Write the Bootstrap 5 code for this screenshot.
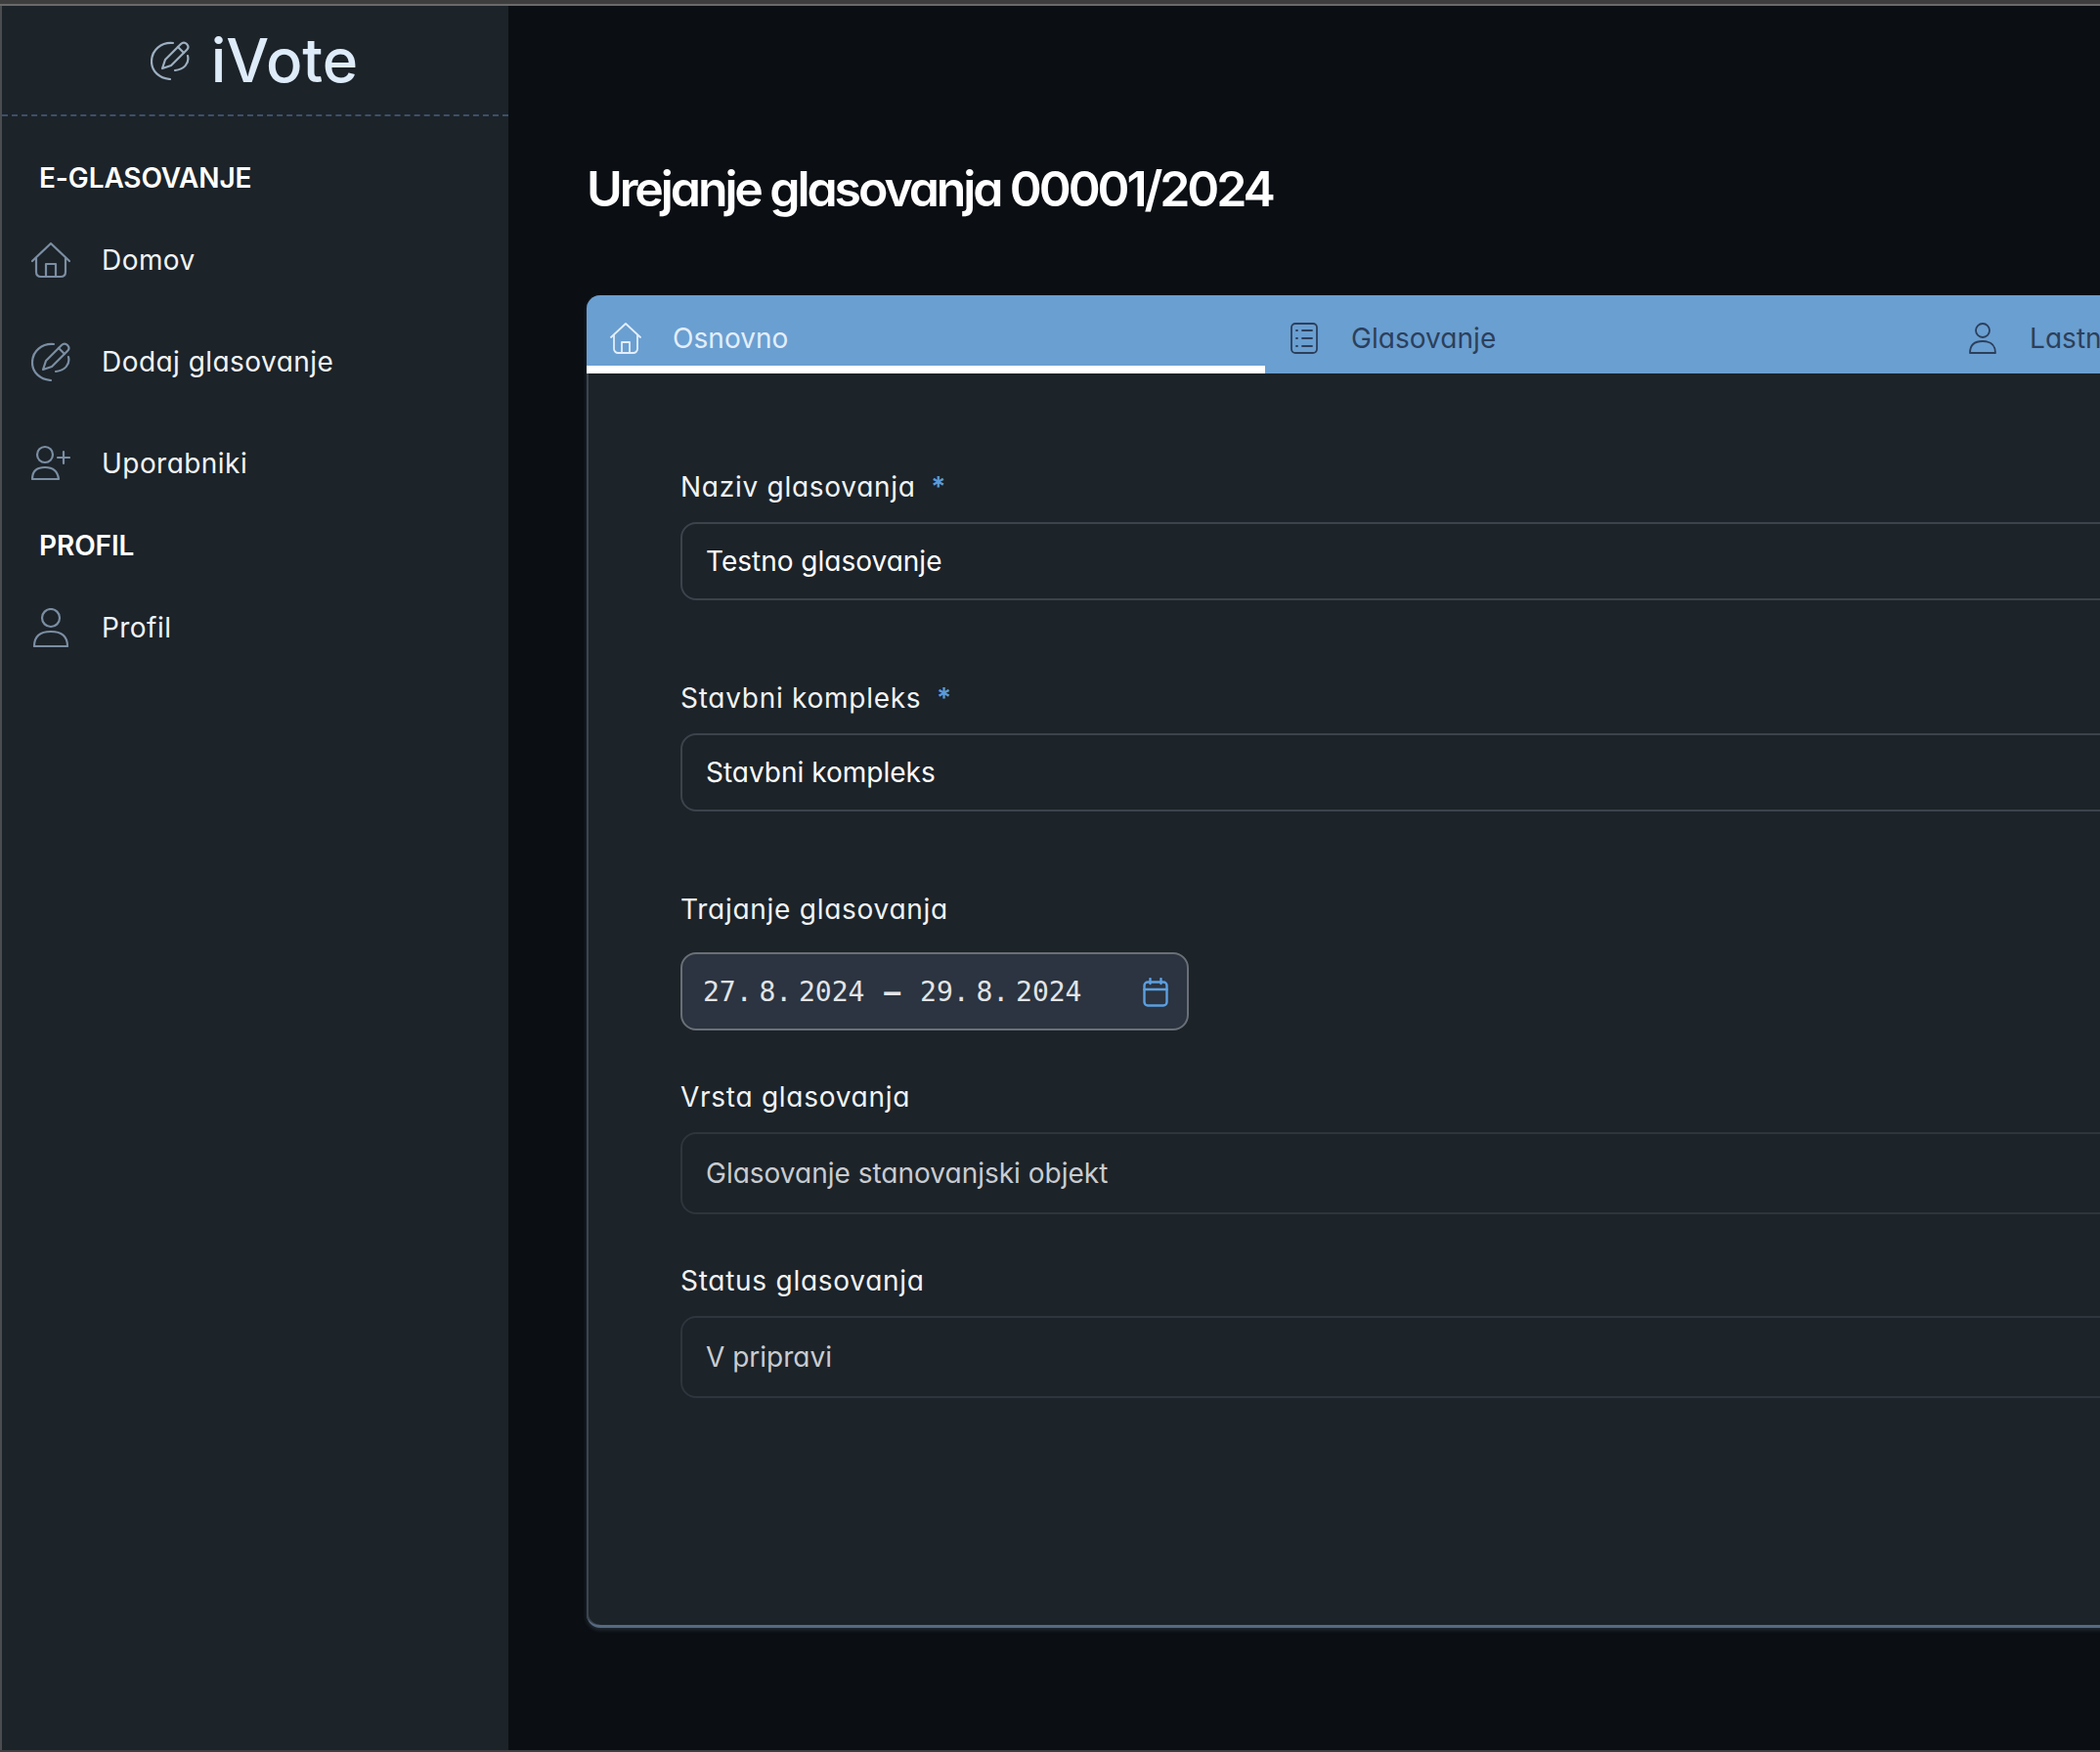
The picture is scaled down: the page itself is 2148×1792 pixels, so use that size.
<!DOCTYPE html>
<html lang="sl">
<head>
    <meta charset="UTF-8">
    <title>iVote - Urejanje glasovanja</title>
    <link href="https://cdn.jsdelivr.net/npm/bootstrap@5.3.0/dist/css/bootstrap.min.css" rel="stylesheet">
    <style>
        html, body { height: 100%; }
        body { background: #0b0f14; color: #fff; font-family: "Inter", "Noto Sans", sans-serif; font-feature-settings: "cv11"; overflow: hidden; }
        .frame-top { height: 6px; background: #3d3d3d; border-bottom: 2px solid #6a6a6a; }
        .frame-main { height: 1784px; border-left: 2px solid #4a4d50; }
        .frame-bottom { height: 2px; background: #3d3f42; }
        .side-panel { width: 518px; flex: 0 0 518px; background: #1c2329; }
        .side-brand { height: 113px; border-bottom: 2px dashed #3e5068; gap: 22px; padding-right: 2px; }
        .side-brand span { font-size: 62px; line-height: 1; font-weight: 500; color: #deebf9; letter-spacing: 0; }
        .side-section { height: 64px; padding-left: 38px; font-size: 28px; font-weight: 600; letter-spacing: -.1px; color: #fff; }
        .side-section.first { margin-top: 31px; }
        .side-link { height: 104px; padding: 0 0 0 30px; color: #f2f4f6; font-size: 28px; letter-spacing: .45px; gap: 32px; }
        .side-link:hover { color: #fff; }
        .side-icon { width: 40px; height: 40px; flex: 0 0 40px; fill: none; stroke: #7b8ea3; stroke-width: 2.2; stroke-linecap: round; stroke-linejoin: round; }
        .page-area { flex: 1 1 auto; min-width: 0; padding-left: 80px; }
        .page-title { height: 296px; margin: 0; font-size: 50px; font-weight: 600; letter-spacing: -3.1px; color: #fff; padding-top: 157px; line-height: 60px; }
        .vote-card { width: 2082px; height: 1363px; background: #1c2329; border: 0; border-bottom: 3px solid #566a80; border-radius: 14px; box-shadow: inset 2px 0 0 #3c444d, 0 2px 4px rgba(120, 140, 160, .25); overflow: hidden; }
        .vote-tabs { height: 80px; background: #6a9fd1; flex-wrap: nowrap; }
        .vote-tabs .nav-link { width: 694px; height: 80px; padding: 28px 0 0 24px; border-radius: 0; color: #2c3f5b; font-size: 28px; line-height: 32px; letter-spacing: .05px; gap: 32px; }
        .vote-tabs .nav-link.active { color: #e3eefb; border-bottom: 8px solid #fff; }
        .tab-icon { width: 32px; height: 32px; flex: 0 0 32px; fill: none; stroke: currentColor; stroke-width: 1.8; stroke-linecap: round; stroke-linejoin: round; }
        .vote-form { padding: 96px 0 0 96px; }
        .field-label { display: block; height: 40px; line-height: 40px; margin: 0 0 16px; font-size: 28px; letter-spacing: .73px; color: #f1f3f5; }
        .field-label b { color: #5a9bdc; font-weight: 600; margin-left: 7px; }
        .vote-form .form-control { height: 80px; padding: 0 24px; background: transparent; border: 2px solid #3c434b; border-radius: 16px; color: #fff; font-size: 28px; letter-spacing: 0; font-feature-settings: "cv11"; box-shadow: none; }
        .vote-form .form-control.locked { height: 84px; border-color: #2f353c; color: #c9ccd1; }
        .gap-large { margin-top: 80px; }
        .gap-small { margin-top: 48px; }
        .date-range { width: 520px; height: 80px; margin-top: 24px; padding: 2px 19px 0 21px; background: #2b3440; border: 2px solid #6b6f76; border-radius: 16px; color: #e2e4e7; font-family: "DejaVu Sans Mono", monospace; font-size: 28px; white-space: pre; }
        .date-range b { margin: 0 3px; }
        .date-dot { letter-spacing: -5px; }
        .date-icon { width: 26px; height: 30px; fill: none; stroke: #5c9fe0; stroke-width: 2.4; stroke-linecap: round; stroke-linejoin: round; }
    </style>
</head>
<body>
<div class="frame-top"></div>
<div class="frame-main d-flex">
    <!-- Sidebar -->
    <aside class="side-panel">
        <div class="side-brand d-flex align-items-center justify-content-center">
            <svg class="side-icon" viewBox="0 0 40 40" style="stroke:#9dafc0"><path d="M23 2C11 1 1 9 1 21c0 10 8 17 19 18"/><path d="M38 15c2 8-4 14-13 15"/><path d="M12 28l3-9L31 3c2-2 4-2 6 0s2 4 0 6L21 25z"/><path d="M28 6l6 6"/></svg>
            <span>iVote</span>
        </div>
        <div class="side-section first d-flex align-items-center">E-GLASOVANJE</div>
        <nav class="nav flex-column">
            <a class="nav-link side-link d-flex align-items-center" href="#">
                <svg class="side-icon" viewBox="0 0 40 36"><path d="M1 19L20 1l19 18"/><path d="M5 16v14c0 3 2 5 5 5h20c3 0 5-2 5-5V16"/><path d="M15 35V22h10v13"/></svg>
                Domov
            </a>
            <a class="nav-link side-link d-flex align-items-center" href="#">
                <svg class="side-icon" viewBox="0 0 40 40"><path d="M23 2C11 1 1 9 1 21c0 10 8 17 19 18"/><path d="M38 15c2 8-4 14-13 15"/><path d="M12 28l3-9L31 3c2-2 4-2 6 0s2 4 0 6L21 25z"/><path d="M28 6l6 6"/></svg>
                Dodaj glasovanje
            </a>
            <a class="nav-link side-link d-flex align-items-center" href="#">
                <svg class="side-icon" viewBox="0 0 40 40"><circle cx="14" cy="11" r="8"/><path d="M1 36c0-8 5-12 13-12s13 4 14 12z"/><path d="M27 14h12M33 8v12"/></svg>
                Uporabniki
            </a>
        </nav>
        <div class="side-section d-flex align-items-center">PROFIL</div>
        <nav class="nav flex-column">
            <a class="nav-link side-link d-flex align-items-center" href="#">
                <svg class="side-icon" viewBox="0 0 40 40"><circle cx="20" cy="10" r="9"/><path d="M3 39c0-10 6-15 17-15s17 5 17 15z"/></svg>
                Profil
            </a>
        </nav>
    </aside>

    <!-- Main content -->
    <main class="page-area">
        <h1 class="page-title">Urejanje glasovanja 00001/2024</h1>
        <div class="card vote-card">
            <ul class="nav vote-tabs">
                <li class="nav-item">
                    <a class="nav-link active d-flex" href="#">
                        <svg class="tab-icon" viewBox="0 0 32 32"><path d="M1 15L16 1l15 14"/><path d="M4 13v14c0 2 2 4 4 4h16c2 0 4-2 4-4V13"/><path d="M12 31V20h8v11"/></svg>
                        Osnovno
                    </a>
                </li>
                <li class="nav-item">
                    <a class="nav-link d-flex" href="#">
                        <svg class="tab-icon" viewBox="0 0 32 32"><rect x="3" y="1" width="26" height="30" rx="4"/><path d="M8 8h1M8 16h1M8 24h1M14 8h10M14 16h10M14 24h10"/></svg>
                        Glasovanje
                    </a>
                </li>
                <li class="nav-item">
                    <a class="nav-link d-flex" href="#">
                        <svg class="tab-icon" viewBox="0 0 32 32"><circle cx="16" cy="8" r="7"/><path d="M3 31c0-8 4-12 13-12s13 4 13 12z"/></svg>
                        Lastniki
                    </a>
                </li>
            </ul>
            <form class="vote-form">
                <label class="field-label">Naziv glasovanja <b>*</b></label>
                <input class="form-control" type="text" value="Testno glasovanje">

                <label class="field-label gap-large">Stavbni kompleks <b>*</b></label>
                <input class="form-control" type="text" value="Stavbni kompleks">

                <label class="field-label gap-large mb-0">Trajanje glasovanja</label>
                <div class="date-range d-flex align-items-center justify-content-between">
                    <span>27<span class="date-dot">. </span>8<span class="date-dot">. </span>2024 <b>–</b> 29<span class="date-dot">. </span>8<span class="date-dot">. </span>2024</span>
                    <svg class="date-icon" viewBox="0 0 26 30"><rect x="1.500" y="4.500" width="23" height="24" rx="3.500"/><path d="M1.500 12h23M7.500 1v5M18.500 1v5"/></svg>
                </div>

                <label class="field-label gap-small">Vrsta glasovanja</label>
                <input class="form-control locked" type="text" value="Glasovanje stanovanjski objekt" disabled>

                <label class="field-label gap-small">Status glasovanja</label>
                <input class="form-control locked" type="text" value="V pripravi" disabled>
            </form>
        </div>
    </main>
</div>
<div class="frame-bottom"></div>
<script src="https://cdn.jsdelivr.net/npm/bootstrap@5.3.0/dist/js/bootstrap.bundle.min.js"></script>
</body>
</html>
